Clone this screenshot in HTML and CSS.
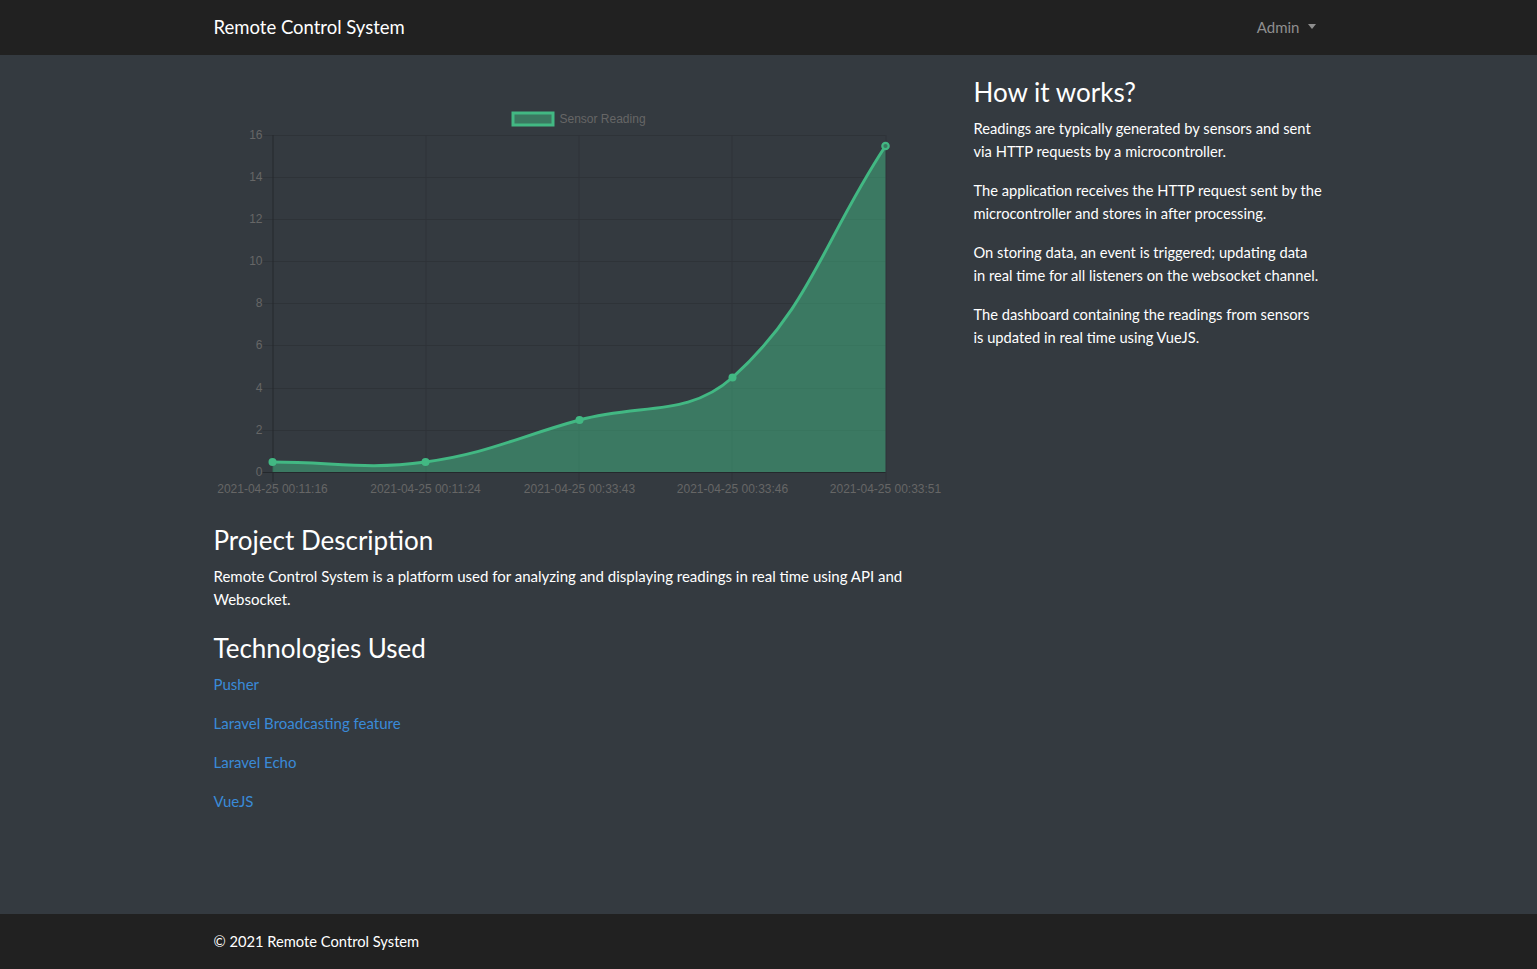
FILE: index.html
```html
<!DOCTYPE html>
<html lang="en">
<head>
<meta charset="utf-8">
<title>Remote Control System</title>
<link rel="stylesheet" href="styles.css">
</head>
<body>
<nav class="navbar">
  <div class="container nav-inner">
    <a class="brand" href="#">Remote Control System</a>
    <a class="admin" href="#">Admin <span class="caret"></span></a>
  </div>
</nav>
<main class="main">
  <div class="container row">
    <div class="col-left">
      <div class="chart">
        <svg width="730" height="448" viewBox="213.5 74 730 448" xmlns="http://www.w3.org/2000/svg">
          <g class="legend">
            <rect x="512.5" y="113" width="40" height="12" fill="#3b7961" stroke="#42b883" stroke-width="3"/>
            <text x="559" y="122.5" class="lbl-legend">Sensor Reading</text>
          </g>
          <g stroke="#2e3338" stroke-width="1">
            <line x1="262" y1="135.5" x2="885" y2="135.5"/>
            <line x1="262" y1="177.5" x2="885" y2="177.5"/>
            <line x1="262" y1="219.5" x2="885" y2="219.5"/>
            <line x1="262" y1="261.5" x2="885" y2="261.5"/>
            <line x1="262" y1="303.5" x2="885" y2="303.5"/>
            <line x1="262" y1="345.5" x2="885" y2="345.5"/>
            <line x1="262" y1="388.5" x2="885" y2="388.5"/>
            <line x1="262" y1="430.5" x2="885" y2="430.5"/>
            <line x1="425.5" y1="135" x2="425.5" y2="482"/>
            <line x1="578.5" y1="135" x2="578.5" y2="482"/>
            <line x1="731.5" y1="135" x2="731.5" y2="482"/>
            <line x1="885.5" y1="135" x2="885.5" y2="482"/>
          </g>
          <g stroke="#24282c" stroke-width="1">
            <line x1="272.5" y1="135" x2="272.5" y2="482"/>
            <line x1="262" y1="472.5" x2="885" y2="472.5"/>
          </g>
          <path d="M272,462 C333.2,462 364.9,470.2 425,462 C487.7,453.4 517.4,436.9 579,420 C640.2,403.1 687.4,417.4 732,377.5 C809.8,307.8 823.8,238.6 885,146 L885,472 L272,472 Z" fill="#42b883" fill-opacity="0.5" stroke="none"/>
          <path d="M272,462 C333.2,462 364.9,470.2 425,462 C487.7,453.4 517.4,436.9 579,420 C640.2,403.1 687.4,417.4 732,377.5 C809.8,307.8 823.8,238.6 885,146" fill="none" stroke="#42b883" stroke-width="3"/>
          <g fill="#42b883">
            <circle cx="272" cy="462" r="4"/>
            <circle cx="425" cy="462" r="4"/>
            <circle cx="579" cy="420" r="4"/>
            <circle cx="732" cy="377.5" r="4"/>
          </g>
          <circle cx="885" cy="146" r="3.2" fill="#3b7961" stroke="#42b883" stroke-width="2.2"/>
          <g class="lbl-y">
            <text x="262" y="139">16</text>
            <text x="262" y="181">14</text>
            <text x="262" y="223">12</text>
            <text x="262" y="265">10</text>
            <text x="262" y="307">8</text>
            <text x="262" y="349">6</text>
            <text x="262" y="392">4</text>
            <text x="262" y="434">2</text>
            <text x="262" y="476">0</text>
          </g>
          <g class="lbl-x">
            <text x="272" y="493">2021-04-25 00:11:16</text>
            <text x="425" y="493">2021-04-25 00:11:24</text>
            <text x="579" y="493">2021-04-25 00:33:43</text>
            <text x="732" y="493">2021-04-25 00:33:46</text>
            <text x="885" y="493">2021-04-25 00:33:51</text>
          </g>
        </svg>
      </div>
      <h2>Project Description</h2>
      <p>Remote Control System is a platform used for analyzing and displaying readings in real time using API and Websocket.</p>
      <h2 class="h-tech">Technologies Used</h2>
      <p><a href="#">Pusher</a></p>
      <p><a href="#">Laravel Broadcasting feature</a></p>
      <p><a href="#">Laravel Echo</a></p>
      <p><a href="#">VueJS</a></p>
    </div>
    <div class="col-right">
      <h2>How it works?</h2>
      <p>Readings are typically generated by sensors and sent<br>via HTTP requests by a microcontroller.</p>
      <p>The application receives the HTTP request sent by the<br>microcontroller and stores in after processing.</p>
      <p>On storing data, an event is triggered; updating data<br>in real time for all listeners on the websocket channel.</p>
      <p>The dashboard containing the readings from sensors<br>is updated in real time using VueJS.</p>
    </div>
  </div>
</main>
<footer class="footer">
  <div class="container">© 2021 Remote Control System</div>
</footer>
</body>
</html>
```

FILE: styles.css
```css
* { box-sizing: border-box; }
html, body { margin: 0; padding: 0; }
body {
  min-height: 100vh;
  display: flex;
  flex-direction: column;
  background: #343a40;
  color: #fff;
  font-family: "Lato", "Noto Sans", sans-serif;
  font-size: 15px;
  line-height: 23px;
}
.container {
  width: 1140px;
  margin: 0 auto;
  padding: 0 15px;
}
.navbar {
  background: #212121;
  height: 55px;
}
.nav-inner {
  height: 55px;
  display: flex;
  align-items: center;
  justify-content: space-between;
}
.brand {
  color: #fff;
  text-decoration: none;
  font-size: 18.5px;
  line-height: 27px;
}
.admin {
  color: #8f8f8f;
  text-decoration: none;
  font-size: 15px;
  margin-right: 8px;
  display: flex;
  align-items: center;
  gap: 8px;
}
.caret {
  width: 0;
  height: 0;
  border-left: 4.5px solid transparent;
  border-right: 4.5px solid transparent;
  border-top: 5px solid #8f8f8f;
  margin-top: -2px;
}
.main {
  flex: 1;
  padding-top: 19px;
}
.row {
  display: flex;
}
.container.row { padding: 0 15px; }
.col-left {
  width: 760px;
  padding-right: 15px;
}
.col-right {
  width: 380px;
  padding-left: 15px;
  font-size: 14.7px;
}
.col-right p { white-space: nowrap; }
.chart svg { display: block; }
.lbl-legend { font-family: "Liberation Sans", Arial, sans-serif; font-size: 12px; fill: #666; }
.lbl-y text { font-family: "Liberation Sans", Arial, sans-serif; font-size: 12px; fill: #666; text-anchor: end; }
.lbl-x text { font-family: "Liberation Sans", Arial, sans-serif; font-size: 12px; fill: #666; text-anchor: middle; }
h2 {
  font-size: 26px;
  font-weight: 400;
  line-height: 33px;
  padding-top: 2px;
  margin: 0 0 8px;
}
.h-tech { padding-top: 5px; }
p {
  margin: 0 0 16px;
}
a { color: #3a8ad8; text-decoration: none; }
.footer {
  background: #212121;
  height: 55px;
  display: flex;
  align-items: center;
}
.footer .container { font-size: 14.7px; }
```
